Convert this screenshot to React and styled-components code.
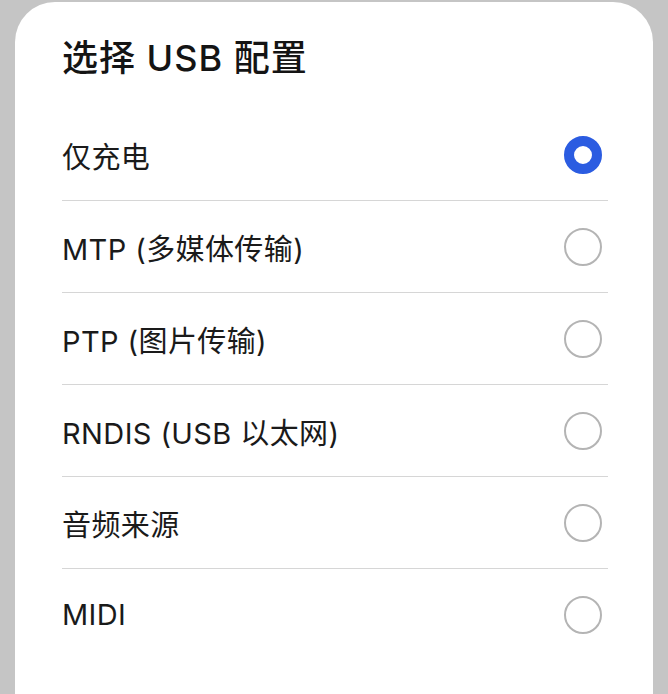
import React, { useState } from "react";
import styled, { createGlobalStyle } from "styled-components";

const Global = createGlobalStyle`
  html, body { margin: 0; padding: 0; background: #c5c5c5; }
  body { font-family: Inter, "Noto Sans CJK SC", sans-serif; }
`;

const Page = styled.div`
  width: 668px;
  height: 694px;
  overflow: hidden;
  background: #c5c5c5;
  padding: 2px 15px 0 15px;
  box-sizing: border-box;
`;

const Card = styled.div`
  background: #ffffff;
  border-radius: 40px 40px 0 0;
  height: 100%;
  padding: 36px 45px 0 47px;
  box-sizing: border-box;
`;

const Title = styled.h1`
  margin: 0 0 31px 0;
  font-size: 36px;
  line-height: 40px;
  font-weight: 500;
  color: #141414;
  letter-spacing: 1px;
`;

const List = styled.div`
  display: flex;
  flex-direction: column;
`;

const Row = styled.label`
  display: flex;
  align-items: center;
  justify-content: space-between;
  height: 91px;
  border-bottom: ${(p) => (p.$last ? "none" : "1px solid #d6d6d6")};
  cursor: pointer;
`;

const Label = styled.span`
  font-size: 29px;
  color: #1a1a1a;
  font-weight: 400;
  letter-spacing: 0.4px;
`;

const Radio = styled.span`
  width: 38px;
  height: 38px;
  border-radius: 50%;
  box-sizing: border-box;
  margin-right: 6px;
  border: ${(p) => (p.$checked ? "10px solid #2b5ce1" : "2px solid #b4b4b4")};
  background: #fff;
`;

const options = [
  "仅充电",
  "MTP (多媒体传输)",
  "PTP (图片传输)",
  "RNDIS (USB 以太网)",
  "音频来源",
  "MIDI",
];

export default function App() {
  const [sel, setSel] = useState(0);
  return (
    <Page>
      <Global />
      <Card>
        <Title>选择 USB 配置</Title>
        <List>
          {options.map((o, i) => (
            <Row key={o} $last={i === options.length - 1} onClick={() => setSel(i)}>
              <Label>{o}</Label>
              <Radio $checked={sel === i} />
            </Row>
          ))}
        </List>
      </Card>
    </Page>
  );
}
